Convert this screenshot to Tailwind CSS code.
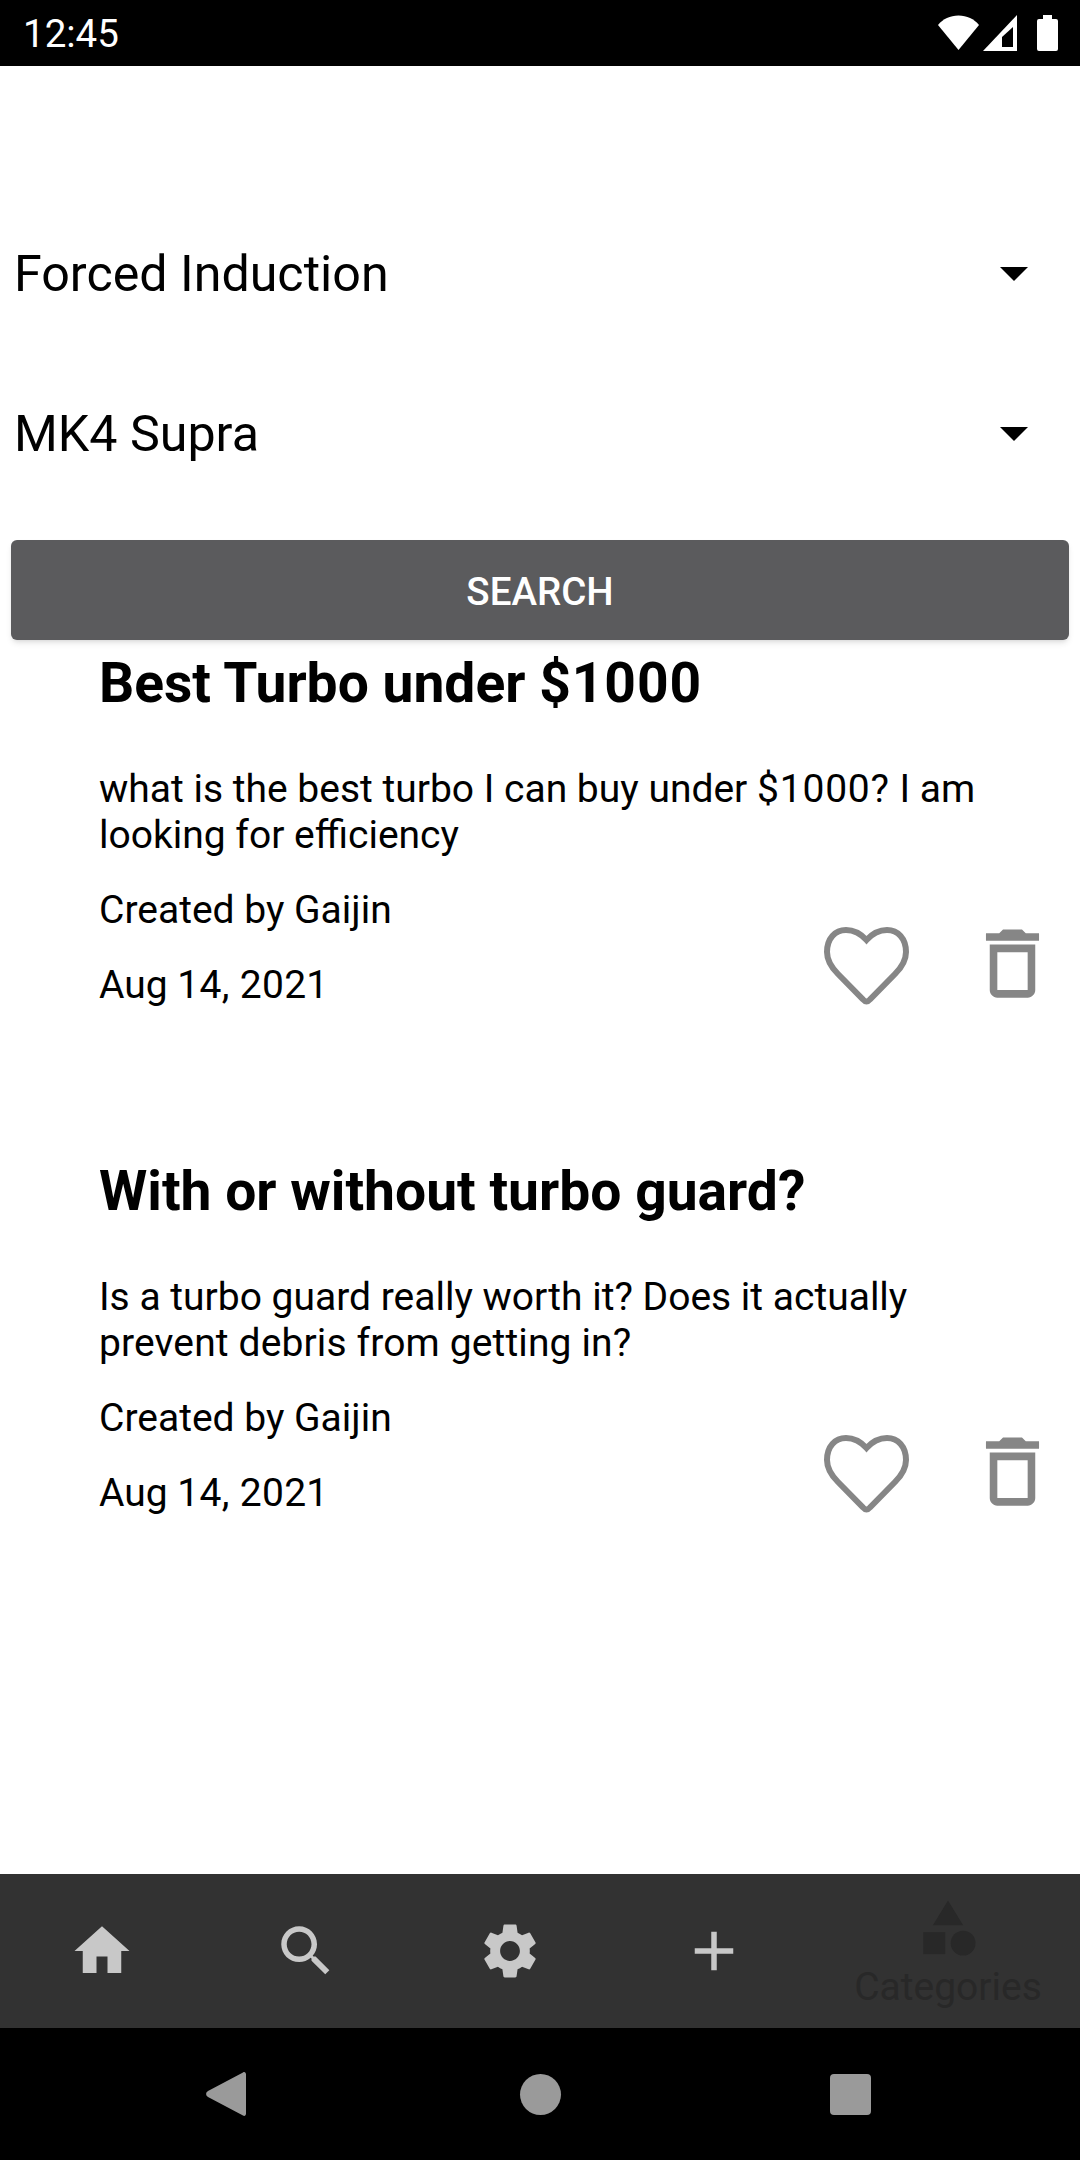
<!DOCTYPE html>
<html>
<head>
<meta charset="utf-8">
<title>Forum search</title>
<script src="https://cdn.jsdelivr.net/npm/@tailwindcss/browser@4"></script>
</head>
<body class="bg-white font-[Roboto,sans-serif] text-black">
<div class="w-[1080px] h-[2160px] flex flex-col overflow-hidden">

  <!-- status bar -->
  <div class="h-[66px] bg-black flex items-center justify-between pl-[23px] pr-[22px] text-white">
    <span class="text-[38.5px] leading-[66px] pt-[2px]">12:45</span>
    <div class="flex items-center">
      <svg class="w-[41px] h-[36px]" viewBox="0 0 41 36"><path fill="#fff" d="M20.500 35 0 10C5 4 12 .5 20.500 .5S36 4 41 10z"/></svg>
      <svg class="w-[34px] h-[36px] ml-[4px]" viewBox="0 0 34 36"><path fill="#fff" d="M34 0v36H0z"/><path fill="#000" d="M19 32h11V12L19 22z"/></svg>
      <svg class="w-[21px] h-[36px] ml-[20px]" viewBox="0 0 21 36"><path fill="#fff" d="M6 0h9v4h4a2 2 0 0 1 2 2v28a2 2 0 0 1-2 2H2a2 2 0 0 1-2-2V6a2 2 0 0 1 2-2h4z"/></svg>
    </div>
  </div>

  <!-- content -->
  <div class="flex-1 flex flex-col">
    <div class="pt-[128px]">
      <div class="h-[160px] flex items-center justify-between pl-[14px] pr-[52px]">
        <span class="text-[50.200px]">Forced Induction</span>
        <span class="w-0 h-0 border-l-[14px] border-r-[14px] border-t-[14px] border-l-transparent border-r-transparent border-t-black"></span>
      </div>
      <div class="h-[160px] flex items-center justify-between pl-[14px] pr-[52px]">
        <span class="text-[50.200px]">MK4 Supra</span>
        <span class="w-0 h-0 border-l-[14px] border-r-[14px] border-t-[14px] border-l-transparent border-r-transparent border-t-black"></span>
      </div>
    </div>

    <button class="mt-[26px] mx-[11px] h-[100px] rounded-[6px] bg-[#5b5b5d] text-white text-[38.500px] font-medium shadow-md pt-[4px]">SEARCH</button>

    <!-- posts -->
    <div class="pl-[99px] pr-[22px]">
      <div class="h-[508px] pt-[11px]">
        <h2 class="text-[55.200px] leading-[64px] font-bold">Best Turbo under <span class="tracking-[0.900px]">$1000</span></h2>
        <p class="mt-[51px] text-[39px] leading-[46px]">what is the best turbo I can buy under <span class="tracking-[0.800px]">$1000?</span> I am<br>looking for efficiency</p>
        <div class="mt-[29px] flex items-start justify-between">
          <div>
            <p class="text-[39px] leading-[46px]">Created by Gaijin</p>
            <p class="mt-[29px] text-[39px] leading-[46px]">Aug <span class="tracking-[0.300px]">14, 2021</span></p>
          </div>
          <div class="flex items-center gap-[58px] mt-[31px]">
            <svg class="w-[85px] h-[78px]" viewBox="0 0 85 78" fill="none" stroke="#868686" stroke-width="6"><path d="M42.500 13C37 7 30 3 22 3 11 3 3 11.500 3 25c0 9 5 16 11 22l25 25.500c2 2.500 5 2.500 7 0L71 47c6-6 11-13 11-22C82 11.500 74 3 63 3c-8 0-15 4-20.500 10z"/></svg>
            <svg class="w-[91px] h-[91px] mb-[4px]" viewBox="0 0 24 24" fill="#868686"><path d="M6 19c0 1.100.9 2 2 2h8c1.100 0 2-.9 2-2V7H6v12zM8 9h8v10H8V9zm7.500-5l-1-1h-5l-1 1H5v2h14V4z"/></svg>
          </div>
        </div>
      </div>
      <div class="h-[508px] pt-[11px]">
        <h2 class="text-[55.200px] leading-[64px] font-bold">With or without turbo guard?</h2>
        <p class="mt-[51px] text-[39px] leading-[46px]">Is a turbo guard really worth it? Does it actually<br><span class="tracking-[0.130px]">prevent debris from getting in?</span></p>
        <div class="mt-[29px] flex items-start justify-between">
          <div>
            <p class="text-[39px] leading-[46px]">Created by Gaijin</p>
            <p class="mt-[29px] text-[39px] leading-[46px]">Aug <span class="tracking-[0.300px]">14, 2021</span></p>
          </div>
          <div class="flex items-center gap-[58px] mt-[31px]">
            <svg class="w-[85px] h-[78px]" viewBox="0 0 85 78" fill="none" stroke="#868686" stroke-width="6"><path d="M42.500 13C37 7 30 3 22 3 11 3 3 11.500 3 25c0 9 5 16 11 22l25 25.500c2 2.500 5 2.500 7 0L71 47c6-6 11-13 11-22C82 11.500 74 3 63 3c-8 0-15 4-20.500 10z"/></svg>
            <svg class="w-[91px] h-[91px] mb-[4px]" viewBox="0 0 24 24" fill="#868686"><path d="M6 19c0 1.100.9 2 2 2h8c1.100 0 2-.9 2-2V7H6v12zM8 9h8v10H8V9zm7.500-5l-1-1h-5l-1 1H5v2h14V4z"/></svg>
          </div>
        </div>
      </div>
    </div>
  </div>

  <!-- bottom tabs -->
  <div class="h-[154px] bg-[#323232] flex">
    <div class="w-[204px] flex items-center justify-center">
      <svg class="w-[66px] h-[66px]" viewBox="0 0 24 24" fill="#c8c8c8"><path d="M10 20v-6h4v6h5v-8h3L12 3 2 12h3v8z"/></svg>
    </div>
    <div class="w-[204px] flex items-center justify-center">
      <svg class="w-[66px] h-[66px]" viewBox="0 0 24 24" fill="#c8c8c8"><path d="M15.500 14h-.79l-.28-.27C15.410 12.590 16 11.110 16 9.500 16 5.910 13.090 3 9.500 3S3 5.910 3 9.500 5.910 16 9.500 16c1.610 0 3.090-.59 4.230-1.570l.27.28v.79l5 4.990L20.490 19l-4.990-5zm-6 0C7.010 14 5 11.990 5 9.500S7.010 5 9.500 5 14 7.010 14 9.500 11.990 14 9.500 14z"/></svg>
    </div>
    <div class="w-[204px] flex items-center justify-center">
      <svg class="w-[66px] h-[66px]" viewBox="0 0 24 24" fill="#c8c8c8"><path d="M19.140 12.940c.04-.3.06-.61.06-.94 0-.32-.02-.64-.07-.94l2.030-1.580c.18-.14.23-.41.12-.61l-1.920-3.320c-.12-.22-.37-.29-.59-.22l-2.390.96c-.5-.38-1.030-.7-1.620-.94l-.36-2.540c-.04-.24-.24-.41-.48-.41h-3.840c-.24 0-.43.17-.47.41l-.36 2.540c-.59.24-1.130.57-1.620.94l-2.390-.96c-.22-.08-.47 0-.59.22L2.740 8.870c-.12.21-.08.47.12.61l2.030 1.580c-.05.3-.09.63-.09.94s.02.64.07.94l-2.030 1.580c-.18.14-.23.41-.12.61l1.920 3.320c.12.22.37.29.59.22l2.390-.96c.5.38 1.030.7 1.620.94l.36 2.540c.05.24.24.41.48.41h3.840c.24 0 .44-.17.47-.41l.36-2.540c.59-.24 1.130-.56 1.620-.94l2.390.96c.22.08.47 0 .59-.22l1.920-3.320c.12-.22.07-.47-.12-.61l-2.010-1.580zM12 15.600c-1.980 0-3.600-1.620-3.600-3.600s1.620-3.600 3.600-3.600 3.600 1.620 3.600 3.600-1.620 3.600-3.600 3.600z"/></svg>
    </div>
    <div class="w-[204px] flex items-center justify-center">
      <svg class="w-[66px] h-[66px]" viewBox="0 0 24 24" fill="#c8c8c8"><path d="M19 13h-6v6h-2v-6H5v-2h6V5h2v6h6v2z"/></svg>
    </div>
    <div class="w-[264px] flex flex-col items-center pt-[21px]">
      <svg class="w-[66px] h-[66px]" viewBox="0 0 24 24" fill="#282828"><path d="M12 2l-5.500 9h11z"/><circle cx="17.500" cy="17.500" r="4.500"/><path d="M3 13.500h8v8H3z"/></svg>
      <span class="mt-[4px] text-[39px] leading-[45px] text-[#282828]">Categories</span>
    </div>
  </div>

  <!-- android nav bar -->
  <div class="h-[132px] bg-black flex items-center">
    <svg class="w-[40px] h-[46px] ml-[206px]" viewBox="0 0 40 46" fill="#9a9a9a"><path d="M37 1.500c1.500-1 3 0 3 2v39c0 2-1.500 3-3 2L2 26c-2.500-1.500-2.500-4.500 0-6z"/></svg>
    <div class="w-[41px] h-[41px] rounded-full bg-[#9a9a9a] ml-[274px]"></div>
    <div class="w-[41px] h-[41px] rounded-[4px] bg-[#9a9a9a] ml-[269px]"></div>
  </div>
</div>
</body>
</html>
